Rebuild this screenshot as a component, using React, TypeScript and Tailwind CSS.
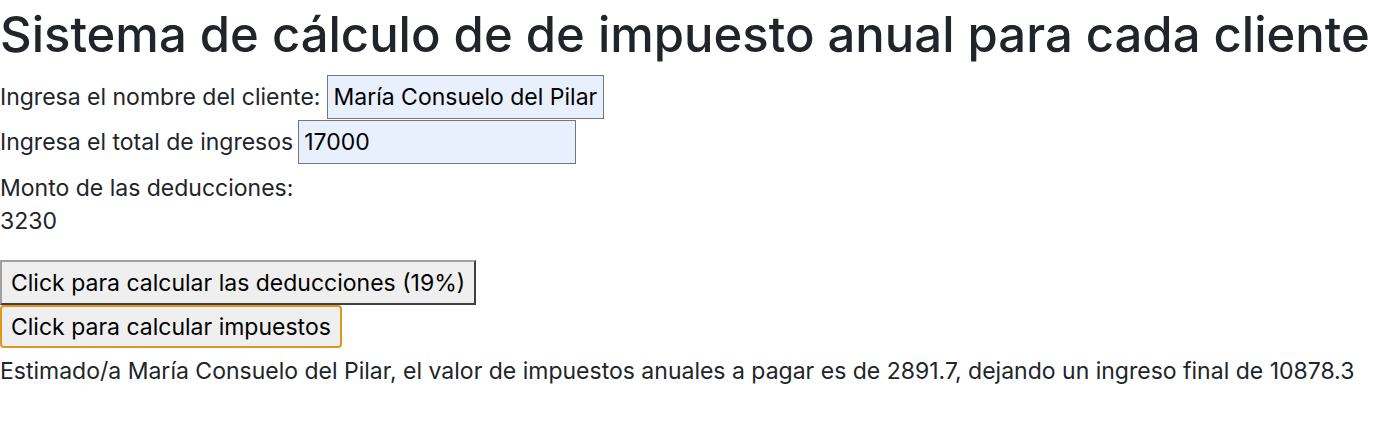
export default function App() {
  const nombre = "María Consuelo del Pilar";
  const ingresos = "17000";

  return (
    <div className="min-h-screen bg-white font-['Inter','Liberation_Sans',sans-serif] text-[23px] leading-[30px] text-[#212529]">
      <h1 className="text-[49px] font-medium leading-[70px]">
        Sistema de cálculo de de impuesto anual para cada cliente
      </h1>
      <div className="mt-[5px] flex items-center gap-[7px]">
        <label>Ingresa el nombre del cliente:</label>
        <input
          readOnly
          value={nombre}
          className="h-[44px] w-[277px] border border-[#767676] bg-[#e8f0fe] px-[5px] text-black outline-none"
        />
      </div>
      <div className="mt-[1px] flex items-center gap-[5px]">
        <label>Ingresa el total de ingresos</label>
        <input
          readOnly
          value={ingresos}
          className="h-[44px] w-[278px] border border-[#767676] bg-[#e8f0fe] px-[5px] text-black outline-none"
        />
      </div>
      <p className="mt-[9px]">Monto de las deducciones:</p>
      <p className="mt-[3px]">3230</p>
      <div className="mt-[24px] flex flex-col items-start">
        <button className="h-[45px] border-2 border-t-[#a0a0a0] border-l-[#a0a0a0] border-r-[#404040] border-b-[#404040] bg-[#efefef] px-[9px] text-black">
          Click para calcular las deducciones (19%)
        </button>
        <button className="h-[43px] rounded-[4px] border-2 border-[#e0981c] bg-[#efefef] px-[9px] text-black">
          Click para calcular impuestos
        </button>
      </div>
      <p className="mt-[8px]">
        Estimado/a {nombre}, el valor de impuestos anuales a pagar es de 2891.7, dejando un ingreso final de 10878.3
      </p>
    </div>
  );
}
